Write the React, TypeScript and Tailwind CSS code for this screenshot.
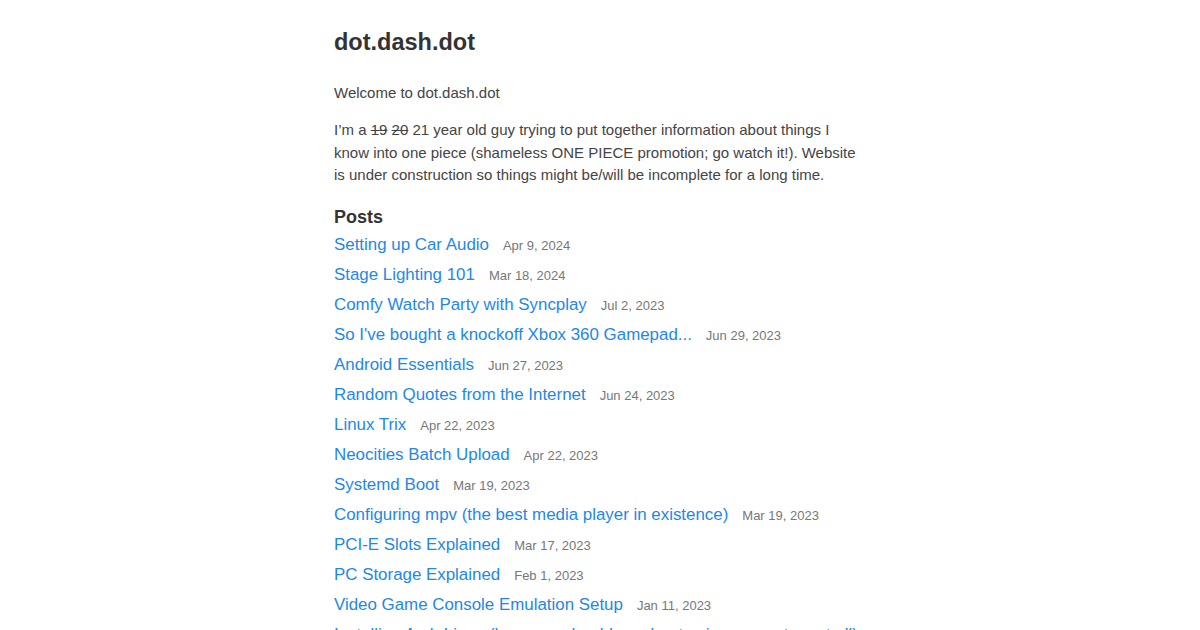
import React from "react";

const posts: [string, string][] = [
  ["Setting up Car Audio", "Apr 9, 2024"],
  ["Stage Lighting 101", "Mar 18, 2024"],
  ["Comfy Watch Party with Syncplay", "Jul 2, 2023"],
  ["So I've bought a knockoff Xbox 360 Gamepad...", "Jun 29, 2023"],
  ["Android Essentials", "Jun 27, 2023"],
  ["Random Quotes from the Internet", "Jun 24, 2023"],
  ["Linux Trix", "Apr 22, 2023"],
  ["Neocities Batch Upload", "Apr 22, 2023"],
  ["Systemd Boot", "Mar 19, 2023"],
  ["Configuring mpv (the best media player in existence)", "Mar 19, 2023"],
  ["PCI-E Slots Explained", "Mar 17, 2023"],
  ["PC Storage Explained", "Feb 1, 2023"],
  ["Video Game Console Emulation Setup", "Jan 11, 2023"],
  ["Installing Arch Linux (how one should go about using computers at all)", "Jan 5, 2023"],
];

export default function App() {
  return (
    <div className="h-[630px] overflow-hidden bg-white text-[#444] font-['Liberation_Sans',Arial,sans-serif]">
      <div className="mx-auto w-[532px] pt-[28px]">
        <h1 className="text-[23.5px] leading-[28px] font-bold text-[#333]">dot.dash.dot</h1>
        <p className="mt-[26px] text-[15px] leading-[22px]">Welcome to dot.dash.dot</p>
        <p className="mt-[15px] text-[15px] leading-[22.5px]">
          I’m a <s>19</s> <s>20</s> 21 year old guy trying to put together information about things I know into one piece (shameless ONE PIECE promotion; go watch it!). Website is under construction so things might be/will be incomplete for a long time.
        </p>
        <h2 className="mt-[19px] text-[18px] leading-[22px] font-bold text-[#333]">Posts</h2>
        <ul className="mt-[2px]">
          {posts.map(([t, d]) => (
            <li key={t} className="flex items-baseline h-[30px] leading-[30px] whitespace-nowrap">
              <a href="#" className="text-[16.9px] text-[#1e88e5]">{t}</a>
              <span className="ml-[14px] text-[13px] text-[#777]">{d}</span>
            </li>
          ))}
        </ul>
      </div>
    </div>
  );
}
